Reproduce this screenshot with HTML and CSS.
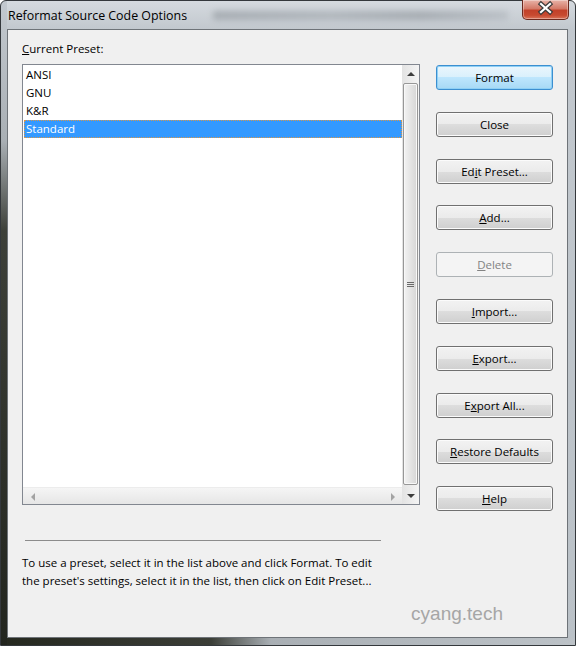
FILE: index.html
```html
<!DOCTYPE html>
<html lang="en">
<head>
<meta charset="UTF-8">
<title>Reformat Source Code Options</title>
<link rel="stylesheet" href="styles.css">
</head>
<body>
<div class="window">
  <div class="title-bar">
    <div class="title-text">Reformat Source Code Options</div>
    <div class="title-glass"></div>
    <div class="close-button">
      <svg width="47" height="20" viewBox="0 0 47 20">
        <path d="M19 5 L28 13 M28 5 L19 13" stroke="#3b3b3b" stroke-width="4.5" stroke-linecap="square"/>
        <path d="M19 5 L28 13 M28 5 L19 13" stroke="#ffffff" stroke-width="2.2" stroke-linecap="square"/>
      </svg>
    </div>
  </div>
  <div class="client">
    <div class="main">
      <div class="preset-column">
        <div class="label"><u>C</u>urrent Preset:</div>
        <div class="listbox">
          <ul class="items">
            <li>ANSI</li>
            <li>GNU</li>
            <li>K&amp;R</li>
            <li class="selected">Standard</li>
          </ul>
          <div class="vscroll">
            <div class="arrow-box"><span class="arrow up"></span></div>
            <div class="thumb"><span class="grip"></span></div>
            <div class="arrow-box"><span class="arrow down"></span></div>
          </div>
          <div class="hscroll">
            <div class="arrow-box"><span class="arrow left"></span></div>
            <div class="arrow-box"><span class="arrow right"></span></div>
          </div>
        </div>
      </div>
      <div class="buttons">
        <div class="button default">Format</div>
        <div class="button">Close</div>
        <div class="button">Ed<u>i</u>t Preset...</div>
        <div class="button"><u>A</u>dd...</div>
        <div class="button disabled"><u>D</u>elete</div>
        <div class="button"><u>I</u>mport...</div>
        <div class="button"><u>E</u>xport...</div>
        <div class="button">E<u>x</u>port All...</div>
        <div class="button"><u>R</u>estore Defaults</div>
        <div class="button"><u>H</u>elp</div>
      </div>
    </div>
    <div class="separator"></div>
    <p class="hint">To use a preset, select it in the list above and click Format. To edit<br>the preset's settings, select it in the list, then click on Edit Preset...</p>
    <div class="watermark">cyang.tech</div>
  </div>
</div>
</body>
</html>
```

FILE: styles.css
```css
body {
  margin: 0;
  font-family: "Open Sans", "Liberation Sans", sans-serif;
  font-size: 11.5px;
  color: #000;
}

.window {
  width: 576px;
  height: 646px;
  box-sizing: border-box;
  border: 1px solid #34383c;
  border-radius: 6px 6px 0 0;
  padding: 0 7px 7px 6px;
  display: flex;
  flex-direction: column;
  background:
    linear-gradient(to bottom, #c3c9cf 0, #a9afb4 140px, #3d4039 230px, #22251e 100%) 0 0 / 6px 100% no-repeat,
    linear-gradient(to right, #25281f 0, #3b3e37 210px, #a9afb4 270px, #bcc2c7 100%) 0 100% / 100% 7px no-repeat,
    linear-gradient(to bottom, #d5dadf 0, #c2c8ce 28px, #bac1c7 100%);
}

.title-bar {
  height: 28px;
  display: flex;
  align-items: center;
}

.title-text {
  margin-left: 1px;
  font-size: 12.4px;
  color: #000;
  white-space: nowrap;
}

.title-glass {
  flex: 1;
  height: 9px;
  margin: 0 14px 0 26px;
  background: linear-gradient(to right, #9ea4aa, #aab0b6 40%, #9da3a9 70%, #b6bcc2);
  filter: blur(3px);
  opacity: 0.8;
}

.close-button {
  align-self: flex-start;
  width: 47px;
  height: 20px;
  margin-top: -1px;
  margin-right: -1px;
  box-sizing: border-box;
  border: 1px solid #6c2a1f;
  border-top: none;
  border-radius: 0 0 5px 5px;
  background: linear-gradient(to bottom, #e8b3a8 0, #d47a68 45%, #c2412a 55%, #c74a30 80%, #d9745a 100%);
  box-shadow: inset 0 0 0 1px rgba(255, 255, 255, 0.35);
}

.close-button svg {
  display: block;
  margin: -1px 0 0 -1px;
}

.client {
  flex: 1;
  background: #f0f0f0;
  border: 1px solid #6e7378;
  padding: 11px 14px 0 14px;
}

.main {
  display: flex;
  align-items: flex-start;
  gap: 16px;
}

.label {
  line-height: 16px;
  margin-bottom: 7px;
}

.listbox {
  width: 398px;
  height: 441px;
  box-sizing: border-box;
  border: 1px solid #828790;
  background: #fff;
  display: grid;
  grid-template-columns: 1fr 17px;
  grid-template-rows: 1fr 17px;
}

.items {
  list-style: none;
  margin: 0;
  padding: 1px 0 0 1px;
}

.items li {
  height: 18px;
  line-height: 18px;
  padding-left: 2px;
}

.items li.selected {
  background: #3399ff;
  color: #fff;
  outline: 1px dotted #d9974a;
  outline-offset: -1px;
}

.vscroll {
  grid-column: 2;
  grid-row: 1 / 3;
  display: flex;
  flex-direction: column;
  background: linear-gradient(to right, #e3e3e3, #f4f4f4);
}

.arrow-box {
  width: 17px;
  height: 17px;
  display: flex;
  align-items: center;
  justify-content: center;
}

.arrow {
  width: 0;
  height: 0;
  border: 4px solid transparent;
}

.arrow.up {
  border-bottom-color: #3c3c3c;
  border-top-width: 0;
}

.arrow.down {
  border-top-color: #3c3c3c;
  border-bottom-width: 0;
}

.arrow.left {
  border-right-color: #a3a3a3;
  border-left-width: 0;
}

.arrow.right {
  border-left-color: #a3a3a3;
  border-right-width: 0;
}

.thumb {
  flex: 1;
  margin: 1px 1px 2px 1px;
  border: 1px solid #979797;
  border-radius: 2px;
  background: linear-gradient(to right, #f3f3f3, #e4e4e4 50%, #d6d6d6);
  box-shadow: inset 0 0 0 1px #f8f8f8;
  display: flex;
  align-items: center;
  justify-content: center;
}

.grip {
  width: 7px;
  height: 5px;
  border-top: 1px solid #6a6a6a;
  border-bottom: 1px solid #6a6a6a;
  box-sizing: border-box;
  background: linear-gradient(#6a6a6a, #6a6a6a) center / 100% 1px no-repeat;
}

.hscroll {
  grid-column: 1;
  grid-row: 2;
  display: flex;
  justify-content: space-between;
  background: linear-gradient(to bottom, #f5f5f5, #e6e6e6);
  border-top: 1px solid #ececec;
  padding: 0 1px;
}

.buttons {
  display: flex;
  flex-direction: column;
  gap: 21.8px;
  padding-top: 24px;
}

.button {
  width: 117px;
  height: 25px;
  box-sizing: border-box;
  border: 1px solid #707070;
  border-radius: 3px;
  background: linear-gradient(to bottom, #f2f2f2 0, #ebebeb 50%, #dddddd 50%, #cfcfcf 100%);
  box-shadow: inset 0 0 0 1px #fbfbfb;
  display: flex;
  align-items: center;
  justify-content: center;
}

.button.default {
  border-color: #3c8fd0;
  background: linear-gradient(to bottom, #eaf6fd 0, #d9f0fc 50%, #bee6fd 50%, #a7d9f5 100%);
  box-shadow: inset 0 0 0 1px #8fd0f5;
}

.button.disabled {
  border-color: #adb2b5;
  background: #f4f4f4;
  box-shadow: none;
  color: #838383;
}

.separator {
  width: 356px;
  height: 1px;
  margin: 29px 0 0 3px;
  background: #8c8c8c;
}

.hint {
  margin: 13px 0 0 0;
  line-height: 18px;
}

.watermark {
  margin: 13px 50px 0 0;
  text-align: right;
  font-family: "Liberation Sans", sans-serif;
  font-size: 19px;
  line-height: 22px;
  color: #a6a6a6;
}
```
